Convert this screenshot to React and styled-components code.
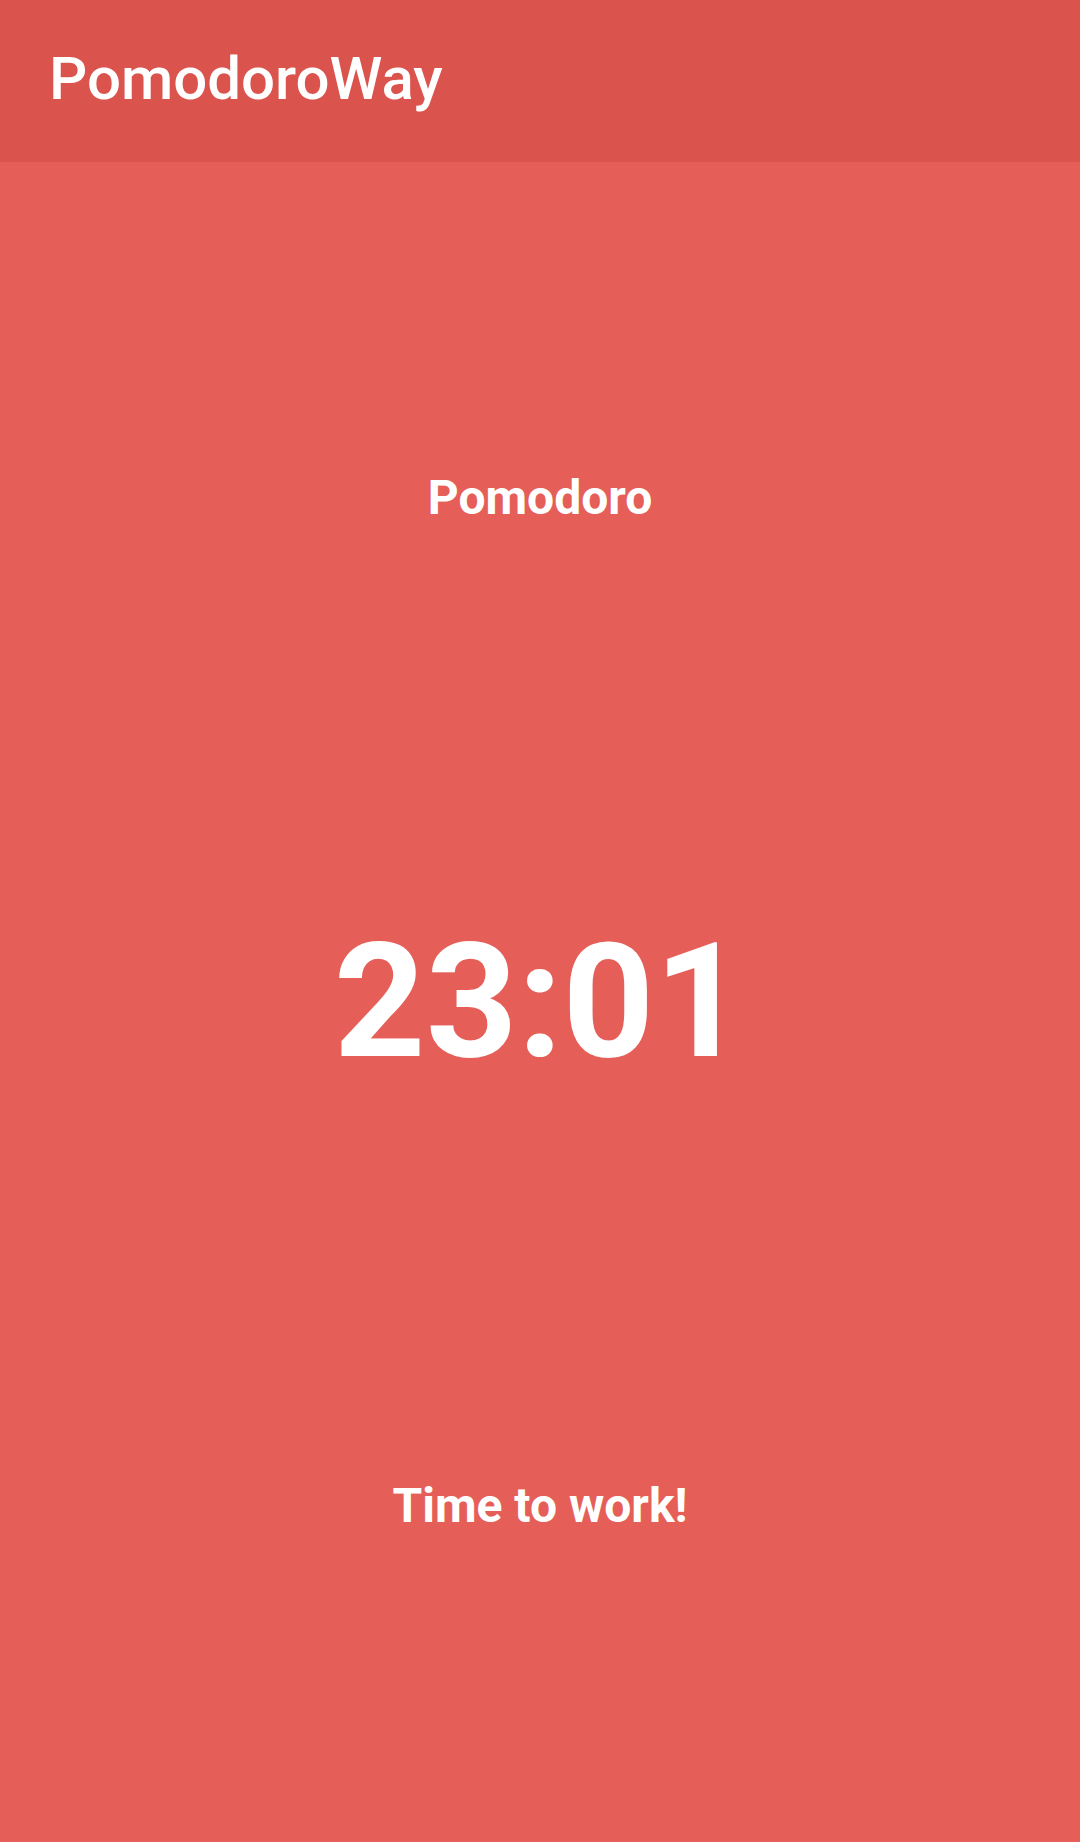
import React from 'react';
import styled, { createGlobalStyle } from 'styled-components';

const GlobalStyle = createGlobalStyle`
  html, body {
    margin: 0;
    padding: 0;
    background: #e55f58;
    font-family: Roboto, "Liberation Sans", sans-serif;
    color: #ffffff;
  }
`;

const Page = styled.div`
  display: flex;
  flex-direction: column;
  min-height: 100vh;
`;

const Header = styled.header`
  background-color: #db534d;
  height: 162px;
  box-sizing: border-box;
  padding: 43px 49px 0;
`;

const Title = styled.h1`
  margin: 0;
  font-size: 60px;
  font-weight: 500;
  line-height: 1.2;
`;

const Main = styled.main`
  flex: 1;
  display: flex;
  flex-direction: column;
  align-items: center;
  justify-content: center;
  gap: 379px;
`;

const Label = styled.div`
  font-size: ${(p) => p.size || 48}px;
  font-weight: 700;
  line-height: 1.2;
  text-align: center;
`;

export default function App() {
  return (
    <Page>
      <GlobalStyle />
      <Header>
        <Title>PomodoroWay</Title>
      </Header>
      <Main>
        <Label>Pomodoro</Label>
        <Label size={160}>23:01</Label>
        <Label>Time to work!</Label>
      </Main>
    </Page>
  );
}
